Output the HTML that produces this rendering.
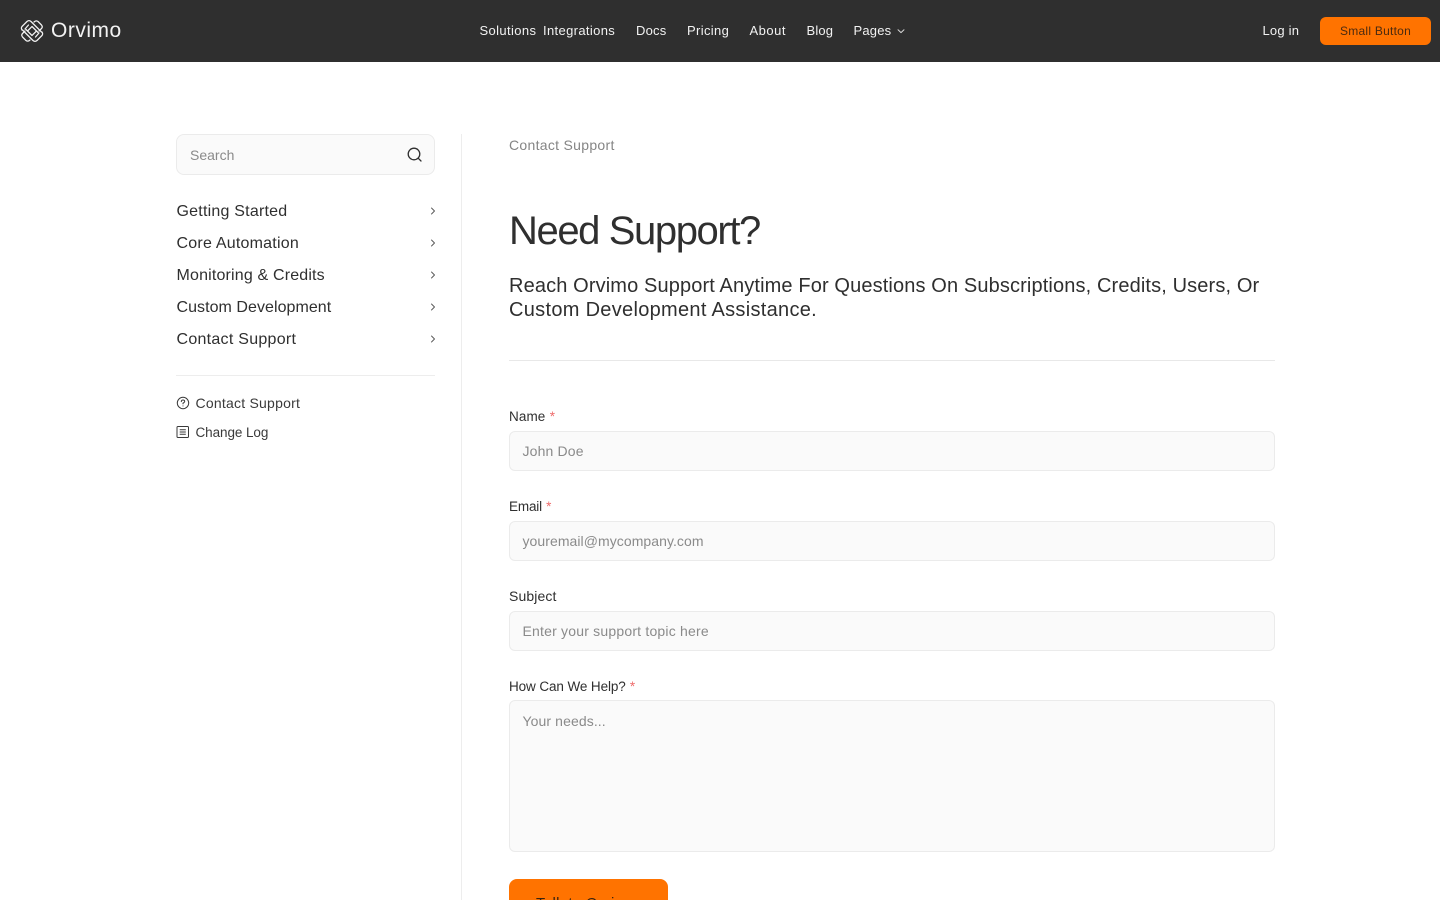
<!DOCTYPE html>
<html lang="en">
<head>
<meta charset="utf-8">
<title>Contact Support - Orvimo</title>
<style>
html,body{margin:0;padding:0;background:#fff;width:1440px;height:900px;overflow:hidden;}
#page{position:relative;width:1440px;height:900px;overflow:hidden;font-family:"Liberation Sans",sans-serif;color:#2f2f2f;}
.t{position:absolute;white-space:nowrap;display:block;text-decoration:none;}
header{position:absolute;left:0;top:0;width:1440px;height:62px;background:#2f2f2f;}
header .t{font-size:13px;line-height:20px;top:21px;color:#f2f2f2;letter-spacing:.2px;}
.btn{position:absolute;background:#ff7300;border-radius:6px;}
.field{position:absolute;left:509px;width:766px;box-sizing:border-box;background:#fafafa;border:1px solid #ebebeb;border-radius:6px;height:40px;}
.ph{color:#8a8a8a;font-size:14px;line-height:20px;letter-spacing:.2px;}
.lb{font-size:14px;line-height:20px;color:#2f2f2f;letter-spacing:.12px;}
.lb i{font-style:normal;color:#ee6b6b;margin-left:.5px;letter-spacing:0;}
.nav{font-size:16px;line-height:24px;left:176.5px;color:#2f2f2f;letter-spacing:.22px;}
.sub{font-size:14px;line-height:20px;left:195.5px;color:#3a3a3a;letter-spacing:.2px;}
svg{position:absolute;display:block;}
.lead{left:509px;font-size:20px;line-height:24px;color:#2f2f2f;}
</style>
</head>
<body>
<div id="page">
<header>
  <svg style="left:20px;top:19px" width="24" height="24" viewBox="0 0 24 24" fill="none" stroke="#f2f2f2" stroke-width="1.25" stroke-linecap="round" stroke-linejoin="round">
    <g>
      <path d="M2 11 Q.8 9 2 7.5 L7 2.5 Q9 .8 11 2.5 L21.5 13"/>
      <path d="M5 10 L8.5 6"/>
      <path d="M12 7.5 L18 13.5"/>
      <path d="M11.7 7.8 L7.5 12"/>
      <path d="M14 3 Q16 1 18 2.5 L21.5 6 Q23 8 21.5 9.5 L19 12"/>
    </g>
    <g transform="rotate(180 12 12)">
      <path d="M2 11 Q.8 9 2 7.5 L7 2.5 Q9 .8 11 2.5 L21.5 13"/>
      <path d="M5 10 L8.5 6"/>
      <path d="M12 7.5 L18 13.5"/>
      <path d="M11.7 7.8 L7.5 12"/>
      <path d="M14 3 Q16 1 18 2.5 L21.5 6 Q23 8 21.5 9.5 L19 12"/>
    </g>
  </svg>
  <a class="t" style="left:51px;top:17px;font-size:21px;line-height:28px;letter-spacing:.5px">Orvimo</a>
  <a class="t" style="left:479.5px;letter-spacing:.38px">Solutions</a>
  <a class="t" style="left:543px;letter-spacing:.35px">Integrations</a>
  <a class="t" style="left:636px">Docs</a>
  <a class="t" style="left:687px;letter-spacing:.35px">Pricing</a>
  <a class="t" style="left:749.5px;letter-spacing:.5px">About</a>
  <a class="t" style="left:806.5px;letter-spacing:.15px">Blog</a>
  <a class="t" style="left:853.5px">Pages</a>
  <svg style="left:896px;top:26px" width="10" height="10" viewBox="0 0 10 10" fill="none" stroke="#d8d8d8" stroke-width="1" stroke-linecap="round" stroke-linejoin="round"><path d="M2 3.8 L5 6.6 L8 3.8"/></svg>
  <a class="t" style="left:1262.5px">Log in</a>
  <div class="btn" style="left:1320px;top:17px;width:111px;height:28px;border-radius:6px"></div>
  <a class="t" style="left:1340px;color:#4a2a10;font-size:12px;letter-spacing:.25px">Small Button</a>
</header>

<aside>
  <div class="field" style="left:176px;top:134px;width:259px;height:41px;border-radius:8px"></div>
  <span class="t ph" style="left:190px;top:145px;letter-spacing:0">Search</span>
  <svg style="left:406px;top:146px" width="17" height="17" viewBox="0 0 17 17" fill="none" stroke="#2f2f2f" stroke-width="1.3" stroke-linecap="round"><circle cx="8" cy="8" r="5.8"/><path d="M12.3 12.3 L15 15"/></svg>

  <a class="t nav" style="top:199.5px">Getting Started</a>
  <a class="t nav" style="top:231.5px">Core Automation</a>
  <a class="t nav" style="top:263.5px;letter-spacing:.17px">Monitoring &amp; Credits</a>
  <a class="t nav" style="top:295.5px;letter-spacing:.05px">Custom Development</a>
  <a class="t nav" style="top:327.5px;letter-spacing:.27px">Contact Support</a>
  <svg style="left:429px;top:206px" width="8" height="10" viewBox="0 0 8 10" fill="none" stroke="#555" stroke-width=".9" stroke-linecap="round" stroke-linejoin="round"><path d="M2.5 2 L5.5 5 L2.5 8"/></svg>
  <svg style="left:429px;top:238px" width="8" height="10" viewBox="0 0 8 10" fill="none" stroke="#555" stroke-width=".9" stroke-linecap="round" stroke-linejoin="round"><path d="M2.5 2 L5.5 5 L2.5 8"/></svg>
  <svg style="left:429px;top:270px" width="8" height="10" viewBox="0 0 8 10" fill="none" stroke="#555" stroke-width=".9" stroke-linecap="round" stroke-linejoin="round"><path d="M2.5 2 L5.5 5 L2.5 8"/></svg>
  <svg style="left:429px;top:302px" width="8" height="10" viewBox="0 0 8 10" fill="none" stroke="#555" stroke-width=".9" stroke-linecap="round" stroke-linejoin="round"><path d="M2.5 2 L5.5 5 L2.5 8"/></svg>
  <svg style="left:429px;top:334px" width="8" height="10" viewBox="0 0 8 10" fill="none" stroke="#555" stroke-width=".9" stroke-linecap="round" stroke-linejoin="round"><path d="M2.5 2 L5.5 5 L2.5 8"/></svg>

  <div style="position:absolute;left:176px;top:375px;width:259px;height:1px;background:#ededed"></div>

  <svg style="left:176px;top:396px" width="14" height="14" viewBox="0 0 14 14" fill="none" stroke="#3a3a3a" stroke-width="1" stroke-linecap="round"><circle cx="7" cy="7" r="5.7"/><path d="M5.3 5.6 Q5.4 4 7 4 Q8.7 4 8.7 5.4 Q8.7 6.3 7 7.2 L7 7.9"/><path d="M7 9.9 L7 10"/></svg>
  <a class="t sub" style="top:393px;letter-spacing:.23px">Contact Support</a>
  <svg style="left:176px;top:425px" width="14" height="14" viewBox="0 0 14 14" fill="none" stroke="#3a3a3a" stroke-width="1"><rect x="1" y="1.5" width="11.5" height="11" rx="1"/><path d="M3.7 4.7 H9.8 M3.7 7 H9.8 M3.7 9.3 H9.8"/></svg>
  <a class="t sub" style="top:423px;font-size:13.5px;letter-spacing:-.08px">Change Log</a>
</aside>

<div style="position:absolute;left:461px;top:134px;width:1px;height:766px;background:#ededed"></div>

<main>
  <span class="t" style="left:509px;top:135px;font-size:14px;line-height:20px;color:#858585;letter-spacing:.3px">Contact Support</span>
  <h1 class="t" style="left:509px;top:206.5px;margin:0;font-size:40px;line-height:48px;font-weight:400;letter-spacing:-1.4px;color:#2f2f2f">Need Support?</h1>
  <p class="t lead" style="top:273.5px;margin:0;letter-spacing:.127px">Reach Orvimo Support Anytime For Questions On Subscriptions, Credits, Users, Or</p>
  <p class="t lead" style="top:297.5px;margin:0;letter-spacing:.3px">Custom Development Assistance.</p>
  <div style="position:absolute;left:509px;top:360px;width:766px;height:1px;background:#e8e8e8"></div>

  <label class="t lb" style="left:509px;top:407px;font-size:13.5px;letter-spacing:.1px">Name <i>*</i></label>
  <div class="field" style="top:431px"></div>
  <span class="t ph" style="left:522.5px;top:441px;letter-spacing:.15px">John Doe</span>

  <label class="t lb" style="left:509px;top:497px;font-size:13.5px;letter-spacing:-.15px">Email <i>*</i></label>
  <div class="field" style="top:521px"></div>
  <span class="t ph" style="left:522.5px;top:531px;letter-spacing:.06px">youremail@mycompany.com</span>

  <label class="t lb" style="left:509px;top:586px">Subject</label>
  <div class="field" style="top:611px"></div>
  <span class="t ph" style="left:522.5px;top:621px;letter-spacing:.2px">Enter your support topic here</span>

  <label class="t lb" style="left:509px;top:677px;font-size:13.5px;letter-spacing:-.1px">How Can We Help? <i>*</i></label>
  <div class="field" style="top:700px;height:152px"></div>
  <span class="t ph" style="left:522.5px;top:711px;letter-spacing:.1px">Your needs...</span>

  <div class="btn" style="left:509px;top:879px;width:159px;height:48px;border-radius:8px"></div>
  <a class="t" style="left:536px;top:894px;font-size:15px;line-height:20px;font-weight:400;color:#3a2410;letter-spacing:.3px">Talk to Orvimo</a>
</main>
</div>
</body>
</html>
